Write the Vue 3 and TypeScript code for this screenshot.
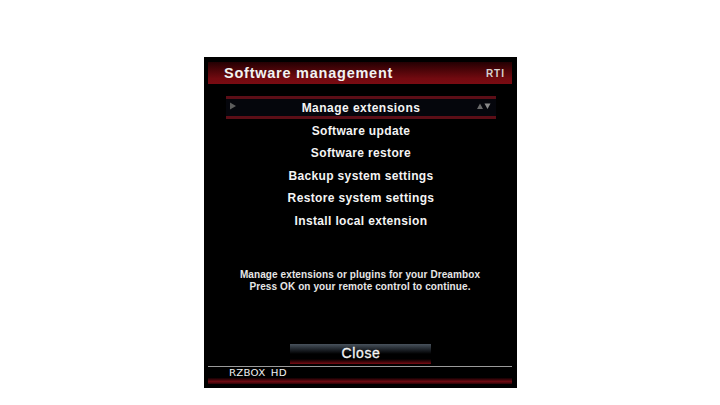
<script setup lang="ts">
const items: string[] = [
  'Software update',
  'Software restore',
  'Backup system settings',
  'Restore system settings',
  'Install local extension',
]
</script>

<template>
  <div class="page">
    <section class="panel">
      <header class="title">
        <h1>Software management</h1>
        <span class="logo">RTI</span>
      </header>

      <div class="menu">
        <div class="row selected">
          <svg class="pointer" width="8" height="8" viewBox="0 0 8 8"><path d="M1 0.5 L7 4 L1 7.5 Z" fill="#5d5d5d" /></svg>
          <span>Manage extensions</span>
          <svg class="updown" width="14" height="7" viewBox="0 0 14 7">
            <path d="M0 6 L3 0.5 L6 6 Z" fill="#6a6a6a" />
            <path d="M7.5 0.5 L13.5 0.5 L10.5 6 Z" fill="#8a8a8a" />
          </svg>
        </div>
        <div v-for="item in items" :key="item" class="row plain">{{ item }}</div>
      </div>

      <p class="desc">Manage extensions or plugins for your Dreambox<br />Press OK on your remote control to continue.</p>

      <div class="close-wrap"><div class="close">Close</div></div>

      <footer class="foot">
        <span class="brand">RZBOX HD</span>
      </footer>
      <div class="bottom-bar"></div>
    </section>
  </div>
</template>

<style>
html, body { background: #fff; }
</style>

<style scoped>
.page {
  width: 720px;
  height: 405px;
  padding: 57px 0 0 204px;
  box-sizing: border-box;
  overflow: hidden;
  background: #fff;
  font-family: "Liberation Sans", Arial, sans-serif;
}
.panel {
  width: 313px;
  height: 331px;
  box-sizing: border-box;
  padding: 5px 5px 4px 4px;
  background: #000;
  display: flex;
  flex-direction: column;
  color: #fff;
}
.title {
  height: 22px;
  flex: none;
  display: flex;
  align-items: center;
  justify-content: space-between;
  padding: 0 7px 0 16px;
  background: linear-gradient(#240003 0%, #4a0408 35%, #720a10 75%, #7a0b12 100%);
}
.title h1 {
  margin: 0;
  font-size: 14.5px;
  font-weight: 700;
  letter-spacing: 0.76px;
  color: #f2f2f2;
}
.logo {
  font-size: 10px;
  font-weight: 700;
  letter-spacing: 1px;
  color: #d9d0d0;
}
.menu {
  margin: 12px 16px 0 18px;
  flex: none;
  display: flex;
  flex-direction: column;
}
.row {
  height: 22.5px;
  display: flex;
  align-items: center;
  justify-content: center;
  font-size: 12px;
  font-weight: 700;
  letter-spacing: 0.35px;
  color: #f4f4f4;
  white-space: nowrap;
}
.plain {
  padding-top: 1px;
  box-sizing: border-box;
}
.selected {
  position: relative;
  height: 23px;
  box-sizing: border-box;
  border-top: 3px solid #5c0e17;
  border-bottom: 3px solid #5c0e17;
  background: #05060c;
  letter-spacing: 0.47px;
}
.pointer {
  position: absolute;
  left: 3px;
  top: 3px;
}
.updown {
  position: absolute;
  right: 5px;
  top: 4px;
}
.desc {
  margin: 37px 0 0;
  flex: none;
  text-align: center;
  font-size: 10px;
  line-height: 12px;
  font-weight: 700;
  letter-spacing: 0.1px;
  color: #e6e6e6;
}
.close-wrap {
  margin-top: auto;
  display: flex;
  justify-content: center;
}
.close {
  width: 141px;
  height: 20px;
  box-sizing: border-box;
  padding: 1px 0 0 2px;
  text-align: center;
  font-size: 14px;
  line-height: 16px;
  font-weight: 400;
  letter-spacing: 0.6px;
  -webkit-text-stroke: 0.3px #f4f4f4;
  color: #f4f4f4;
  background: linear-gradient(#48525c 0%, #1d2228 28%, #000 50%, #000 75%, #2a0306 85%, #7a0a12 100%);
}
.foot {
  margin-top: 2px;
  height: 12px;
  box-sizing: border-box;
  flex: none;
  border-top: 1px solid #9a9a9a;
  padding-left: 21px;
  display: flex;
  align-items: center;
}
.brand {
  font-family: "DejaVu Sans", sans-serif;
  font-size: 8.5px;
  font-weight: 400;
  letter-spacing: 0.2px;
  word-spacing: 1.5px;
  color: #f0f0f0;
  transform: scaleX(1.2);
  transform-origin: left center;
  white-space: nowrap;
}
.bottom-bar {
  flex: none;
  height: 6px;
  background: linear-gradient(#120002, #6f0a12 60%, #2a0306);
}
</style>
